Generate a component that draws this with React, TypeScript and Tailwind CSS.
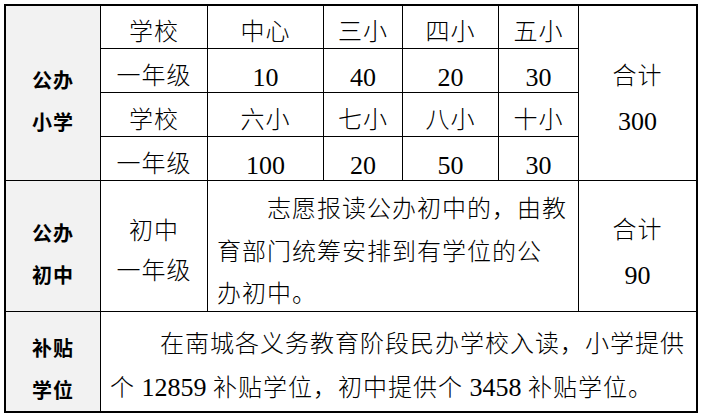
import React from "react";

const CJK = "[font-family:'Liberation_Serif','Noto_Sans_CJK_SC',serif] text-[24px] tracking-[1px] font-light text-black";
const NUM = "[font-family:'Liberation_Serif',serif] text-[26px] text-black";
const LABEL = "bg-[#f2f2f2] flex flex-col items-center justify-center [font-family:'Noto_Sans_CJK_SC',sans-serif] text-[20px] font-bold tracking-[1px] leading-[42px] text-black";

function TxtCell({ t }: { t: string }) {
  return <div className={"bg-white flex items-center justify-center pt-[10px] leading-none " + CJK}>{t}</div>;
}

function NumCell({ t }: { t: string }) {
  return <div className={"bg-white flex items-center justify-center pt-[14px] leading-none " + NUM}>{t}</div>;
}

function D({ t }: { t: string }) {
  return <span className="[font-family:'Liberation_Serif',serif] text-[26px] tracking-normal">{t}</span>;
}

export default function App() {
  return (
    <div className="w-[702px] h-[417px] bg-white p-1">
      <div className="w-fit border-2 border-black bg-black grid gap-px grid-cols-[94px_106px_115px_78px_95px_79px_117px] grid-rows-[42px_43px_43px_43px_130px_99px]">
        {/* Row 1 */}
        <div className={"row-span-4 pt-[16px] " + LABEL}>
          <div>公办</div>
          <div>小学</div>
        </div>
        <TxtCell t="学校" />
        <TxtCell t="中心" />
        <TxtCell t="三小" />
        <TxtCell t="四小" />
        <TxtCell t="五小" />
        <div className="row-span-4 bg-white flex flex-col items-center justify-center pt-[12px]">
          <div className={"leading-[45px] " + CJK}>合计</div>
          <div className={"leading-[45px] " + NUM}>300</div>
        </div>
        {/* Row 2 */}
        <TxtCell t="一年级" />
        <NumCell t="10" />
        <NumCell t="40" />
        <NumCell t="20" />
        <NumCell t="30" />
        {/* Row 3 */}
        <TxtCell t="学校" />
        <TxtCell t="六小" />
        <TxtCell t="七小" />
        <TxtCell t="八小" />
        <TxtCell t="十小" />
        {/* Row 4 */}
        <TxtCell t="一年级" />
        <NumCell t="100" />
        <NumCell t="20" />
        <NumCell t="50" />
        <NumCell t="30" />
        {/* Row 5 */}
        <div className={"pt-[16px] " + LABEL}>
          <div>公办</div>
          <div>初中</div>
        </div>
        <div className="bg-white flex flex-col items-center justify-center pt-[10px]">
          <div className={"leading-[40px] " + CJK}>初中</div>
          <div className={"leading-[40px] " + CJK}>一年级</div>
        </div>
        <div className={"col-span-4 bg-white flex flex-col pt-[7px] pl-[9px] leading-[42.5px] whitespace-nowrap " + CJK}>
          <div className="pl-[50px]">志愿报读公办初中的，由教</div>
          <div>育部门统筹安排到有学位的公</div>
          <div>办初中。</div>
        </div>
        <div className="bg-white flex flex-col items-center justify-center pt-[13px]">
          <div className={"leading-[45px] " + CJK}>合计</div>
          <div className={"leading-[45px] " + NUM}>90</div>
        </div>
        {/* Row 6 */}
        <div className={"pt-[15px] " + LABEL}>
          <div>补贴</div>
          <div>学位</div>
        </div>
        <div className={"col-span-6 bg-white flex flex-col pt-[10px] pl-[9px] leading-[44px] whitespace-nowrap " + CJK}>
          <div className="pl-[50px]">在南城各义务教育阶段民办学校入读，小学提供</div>
          <div>
            个<D t=" 12859 " />补贴学位，初中提供个<D t=" 3458 " />补贴学位。
          </div>
        </div>
      </div>
    </div>
  );
}
